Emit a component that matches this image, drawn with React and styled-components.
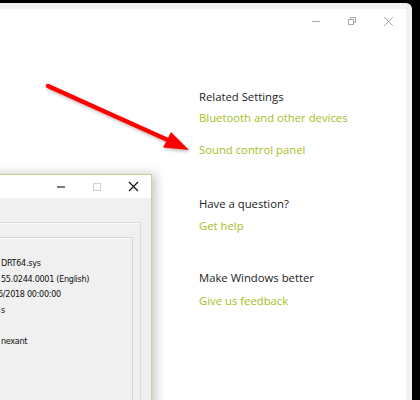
import styled, { createGlobalStyle } from "styled-components";

const GlobalStyle = createGlobalStyle`
  html, body { margin: 0; padding: 0; background: #000; }
  body { width: 420px; height: 400px; overflow: hidden; }
`;

const Desktop = styled.div`
  position: relative;
  width: 420px;
  height: 400px;
  background: #000;
  padding-top: 3px;
  box-sizing: border-box;
  overflow: hidden;
`;

const Frame = styled.div`
  width: 412px;
  height: 397px;
  box-sizing: border-box;
  padding: 6px 6px 0 0;
  background: #f2f2f2;
  border-top-right-radius: 6px;
`;

const Panel = styled.div`
  height: 100%;
  background: #fff;
  display: flex;
  flex-direction: column;
`;

const TitleBar = styled.div`
  display: flex;
  justify-content: flex-end;
  height: 24px;
`;

const CaptionButton = styled.div`
  width: 36px;
  height: 100%;
  display: flex;
  align-items: center;
  justify-content: center;
`;

const Content = styled.div`
  margin: 54px 0 0 199px;
  display: flex;
  flex-direction: column;
  font-family: "Open Sans", "Noto Sans", sans-serif;
  font-size: 11.3px;
  line-height: 20px;
`;

const Section = styled.div`
  display: flex;
  flex-direction: column;
  margin-top: ${p => p.$top}px;
`;

const Heading = styled.div`
  color: #222;
  margin-bottom: ${p => p.$gap}px;
`;

const Links = styled.div`
  display: flex;
  flex-direction: column;
  gap: 12px;
`;

const Link = styled.a`
  color: #a2c11c;
  text-decoration: none;
  cursor: pointer;
`;

const Dialog = styled.div`
  position: absolute;
  left: -250px;
  top: 174px;
  width: 402px;
  height: 260px;
  box-sizing: border-box;
  border: 1px solid #c6cf96;
  background: #f0f0f0;
  box-shadow: 4px 0 10px rgba(0, 0, 0, 0.22);
  display: flex;
  flex-direction: column;
`;

const DialogTitle = styled.div`
  height: 23px;
  background: #fff;
  display: flex;
  justify-content: flex-end;
  flex-shrink: 0;
`;

const DialogBody = styled.div`
  flex: 1;
  padding: 24px 10px 0 0;
  display: flex;
  flex-direction: column;
`;

const TabPanel = styled.div`
  flex: 1;
  border: 1px solid #dcdcdc;
  border-bottom: none;
  box-shadow: inset 1px 1px 0 #fafafa;
  padding: 14px 7px 0 0;
  display: flex;
  flex-direction: column;
`;

const GroupBox = styled.div`
  flex: 1;
  border: 1px solid #d5d5d5;
  border-bottom: none;
  box-shadow: inset 1px 1px 0 #fafafa;
  padding: 18px 0 0 250px;
  font-family: Tahoma, "DejaVu Sans Condensed", "Liberation Sans", sans-serif;
  font-size: 9px;
  letter-spacing: -0.3px;
  line-height: 15.5px;
  color: #111;
`;

const InfoLine = styled.div`
  height: 15.5px;
  white-space: nowrap;
  margin-left: ${p => p.$shift || 0}px;
`;

const ArrowLayer = styled.svg`
  position: absolute;
  left: 0;
  top: 0;
  pointer-events: none;
`;

const info = [
  { text: "DRT64.sys", shift: -2 },
  { text: "55.0244.0001 (English)", shift: -2 },
  { text: "6/2018 00:00:00", shift: -5 },
  { text: "s", shift: -2 },
  { text: "", shift: 0 },
  { text: "nexant", shift: -2 },
];

const sections = [
  { title: "Related Settings", top: 0, gap: 1, links: ["Bluetooth and other devices", "Sound control panel"] },
  { title: "Have a question?", top: 34, gap: 2, links: ["Get help"] },
  { title: "Make Windows better", top: 32, gap: 3, links: ["Give us feedback"] },
];

export default function App() {
  return (
    <Desktop>
      <GlobalStyle />
      <Frame>
        <Panel>
          <TitleBar>
            <CaptionButton>
              <svg width="10" height="10" viewBox="0 0 10 10">
                <path d="M1 5.5h8" stroke="#a8a8a8" strokeWidth="1" />
              </svg>
            </CaptionButton>
            <CaptionButton>
              <svg width="10" height="10" viewBox="0 0 10 10">
                <path d="M1.5 3.5h5v5h-5z M3.5 3.5v-2h5v5h-2" fill="none" stroke="#a8a8a8" strokeWidth="1" />
              </svg>
            </CaptionButton>
            <CaptionButton>
              <svg width="11" height="11" viewBox="0 0 11 11">
                <path d="M1 1l9 9M10 1l-9 9" stroke="#a8a8a8" strokeWidth="1" />
              </svg>
            </CaptionButton>
          </TitleBar>
          <Content>
            {sections.map(s => (
              <Section key={s.title} $top={s.top}>
                <Heading $gap={s.gap}>{s.title}</Heading>
                <Links>
                  {s.links.map(l => <Link key={l}>{l}</Link>)}
                </Links>
              </Section>
            ))}
          </Content>
        </Panel>
      </Frame>

      <Dialog>
        <DialogTitle>
          <CaptionButton>
            <svg width="10" height="10" viewBox="0 0 10 10">
              <path d="M1 5h8" stroke="#7a7a7a" strokeWidth="2" />
            </svg>
          </CaptionButton>
          <CaptionButton>
            <svg width="10" height="10" viewBox="0 0 10 10">
              <rect x="1.5" y="1.5" width="7" height="7" fill="none" stroke="#cfcfcf" strokeWidth="1" />
            </svg>
          </CaptionButton>
          <CaptionButton>
            <svg width="11" height="11" viewBox="0 0 11 11">
              <path d="M1 1l9 9M10 1l-9 9" stroke="#111" strokeWidth="1.2" />
            </svg>
          </CaptionButton>
        </DialogTitle>
        <DialogBody>
          <TabPanel>
            <GroupBox>
              {info.map((line, i) => (
                <InfoLine key={i} $shift={line.shift}>{line.text}</InfoLine>
              ))}
            </GroupBox>
          </TabPanel>
        </DialogBody>
      </Dialog>

      <ArrowLayer width="420" height="400" viewBox="0 0 420 400">
        <defs>
          <filter id="arrowShadow" x="-10%" y="-10%" width="130%" height="140%">
            <feDropShadow dx="1" dy="2" stdDeviation="1.5" floodColor="#000" floodOpacity="0.25" />
          </filter>
        </defs>
        <g filter="url(#arrowShadow)">
          <path d="M48 86 L170 141" stroke="#ff0000" strokeWidth="4.5" strokeLinecap="round" />
          <path d="M189 150 L163 147.5 L171 132 Z" fill="#ff0000" />
        </g>
      </ArrowLayer>
    </Desktop>
  );
}
